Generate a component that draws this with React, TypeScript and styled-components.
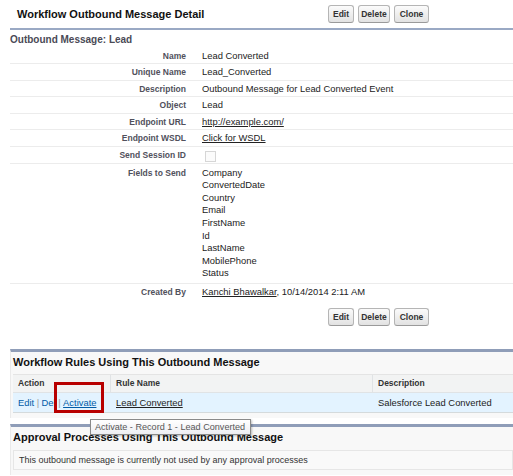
import React from "react";
import styled, { createGlobalStyle } from "styled-components";

const Global = createGlobalStyle`
  html, body {
    margin: 0;
    padding: 0;
    background: #ffffff;
    font-family: "Liberation Sans", Arial, sans-serif;
    color: #222;
  }
`;

const Page = styled.div`
  width: 513px;
  height: 476px;
  overflow: hidden;
  position: relative;
`;

const DetailHeader = styled.div`
  margin-left: 10px;
  height: 28px;
  display: flex;
  align-items: center;
  border-bottom: 2px solid #9aa9c4;
`;

const Title = styled.h2`
  margin: 0;
  width: 311px;
  padding-left: 7px;
  font-size: 11px;
  font-weight: bold;
  color: #111;
`;

const ButtonBar = styled.div<{ $offset?: number }>`
  display: flex;
  gap: 4px;
  margin-left: ${(p) => p.$offset ?? 0}px;
`;

const Btn = styled.button<{ $w: number }>`
  width: ${(p) => p.$w}px;
  height: 18px;
  padding: 0;
  font-family: "Liberation Sans", Arial, sans-serif;
  font-size: 8.5px;
  font-weight: bold;
  color: #333;
  background: linear-gradient(#fbfbfb, #e2e2e2);
  border: 1px solid #b5b5b5;
  border-bottom-color: #9a9a9a;
  border-radius: 3px;
`;

const SubTitle = styled.h3`
  margin: 1px 0 0 10px;
  height: 17px;
  line-height: 17px;
  font-size: 10px;
  font-weight: bold;
  color: #4a4a56;
`;

const Row = styled.div<{ $last?: boolean; $tall?: boolean }>`
  display: grid;
  grid-template-columns: 176px 1fr;
  margin-left: 10px;
  padding: ${(p) => (p.$tall ? "3px 0 3px" : "1.7px 0 1.2px")};
  line-height: 12.6px;
  border-bottom: 1px solid ${(p) => (p.$last ? "transparent" : "#ececec")};
`;

const Label = styled.div`
  text-align: right;
  font-size: 8.5px;
  font-weight: bold;
  color: #51515c;
`;

const Value = styled.div`
  padding-left: 16px;
  font-size: 9.4px;
  color: #222;
`;

const Link = styled.a`
  color: #222;
  text-decoration: underline;
`;

const Check = styled.span`
  display: inline-block;
  width: 9px;
  height: 9px;
  margin: 2px 0 0 3px;
  border: 1px solid #d6d6d6;
  background: #fbfbfb;
  vertical-align: top;
`;

const Related = styled.section<{ $top: number }>`
  margin: ${(p) => p.$top}px 0 0 10px;
  border-top: 3px solid #8f9db8;
  background: #f8f8f8;
  border-left: 1px solid #eaeaea;
  padding: 0 0 5px 2px;
`;

const RelTitle = styled.h3`
  margin: 0;
  padding: 1px 0 3px;
  line-height: 18px;
  font-size: 11px;
  font-weight: bold;
  color: #111;
`;

const Table = styled.div`
  position: relative;
  border-top: 1px solid #e4e4e4;
`;

const Tr = styled.div<{ $head?: boolean }>`
  display: grid;
  grid-template-columns: 98px 262px 1fr;
  background: ${(p) => (p.$head ? "#f2f3f3" : "#e3f3ff")};
  border-bottom: 1px solid ${(p) => (p.$head ? "#e0e3e5" : "#d4dadc")};
`;

const Th = styled.div`
  padding-left: 5px;
  height: 17px;
  line-height: 17px;
  font-size: 8.5px;
  font-weight: bold;
  color: #333;
  border-right: 1px solid #e0e3e5;
  &:last-child {
    border-right: none;
  }
`;

const Td = styled.div`
  padding-left: 5px;
  height: 19px;
  line-height: 19px;
  font-size: 9.4px;
  color: #222;
  white-space: nowrap;
`;

const ActionLink = styled.a<{ $hover?: boolean }>`
  color: #015ba7;
  text-decoration: ${(p) => (p.$hover ? "underline" : "none")};
`;

const Pipe = styled.span`
  color: #999;
  margin: 0 2.5px;
`;

const Marker = styled.div`
  position: absolute;
  left: 41px;
  top: 7px;
  width: 44px;
  height: 25px;
  border: 3px solid #b80000;
  pointer-events: none;
`;

const Tooltip = styled.div`
  position: absolute;
  left: 90px;
  top: 419px;
  height: 14px;
  padding: 0 5px 0 4px;
  line-height: 14px;
  font-size: 9.1px;
  color: #575757;
  background: linear-gradient(#ffffff, #eeeef2);
  border: 1px solid #8a8a8a;
  box-shadow: 1px 1px 2px rgba(0, 0, 0, 0.25);
  white-space: nowrap;
  z-index: 2;
`;

const Empty = styled.div`
  margin-top: 1px;
  height: 18px;
  line-height: 18px;
  padding-left: 5px;
  font-size: 9px;
  color: #333;
  background: #f9f9f9;
  border: 1px solid #e6e6e6;
`;

const fields = [
  "Company",
  "ConvertedDate",
  "Country",
  "Email",
  "FirstName",
  "Id",
  "LastName",
  "MobilePhone",
  "Status",
];

const buttons = (
  <>
    <Btn $w={26}>Edit</Btn>
    <Btn $w={32}>Delete</Btn>
    <Btn $w={35}>Clone</Btn>
  </>
);

export default function App() {
  return (
    <Page>
      <Global />
      <DetailHeader>
        <Title>Workflow Outbound Message Detail</Title>
        <ButtonBar>{buttons}</ButtonBar>
      </DetailHeader>
      <SubTitle>Outbound Message: Lead</SubTitle>

      <Row>
        <Label>Name</Label>
        <Value>Lead Converted</Value>
      </Row>
      <Row>
        <Label>Unique Name</Label>
        <Value>Lead_Converted</Value>
      </Row>
      <Row>
        <Label>Description</Label>
        <Value>Outbound Message for Lead Converted Event</Value>
      </Row>
      <Row>
        <Label>Object</Label>
        <Value>Lead</Value>
      </Row>
      <Row>
        <Label>Endpoint URL</Label>
        <Value>
          <Link>http://example.com/</Link>
        </Value>
      </Row>
      <Row>
        <Label>Endpoint WSDL</Label>
        <Value>
          <Link>Click for WSDL</Link>
        </Value>
      </Row>
      <Row>
        <Label>Send Session ID</Label>
        <Value>
          <Check />
        </Value>
      </Row>
      <Row $tall>
        <Label>Fields to Send</Label>
        <Value>
          {fields.map((f) => (
            <div key={f}>{f}</div>
          ))}
        </Value>
      </Row>
      <Row $last>
        <Label>Created By</Label>
        <Value>
          <Link>Kanchi Bhawalkar</Link>, 10/14/2014 2:11 AM
        </Value>
      </Row>

      <ButtonBar $offset={328} style={{ marginTop: 7 }}>
        {buttons}
      </ButtonBar>

      <Related $top={23}>
        <RelTitle>Workflow Rules Using This Outbound Message</RelTitle>
        <Table>
          <Tr $head>
            <Th>Action</Th>
            <Th>Rule Name</Th>
            <Th>Description</Th>
          </Tr>
          <Tr>
            <Td>
              <ActionLink>Edit</ActionLink>
              <Pipe>|</Pipe>
              <ActionLink>Del</ActionLink>
              <Pipe>|</Pipe>
              <ActionLink $hover>Activate</ActionLink>
            </Td>
            <Td>
              <Link>Lead Converted</Link>
            </Td>
            <Td>Salesforce Lead Converted</Td>
          </Tr>
          <Marker />
        </Table>
      </Related>

      <Related $top={6}>
        <RelTitle>Approval Processes Using This Outbound Message</RelTitle>
        <Empty>
          This outbound message is currently not used by any approval processes
        </Empty>
      </Related>

      <Tooltip>Activate - Record 1 - Lead Converted</Tooltip>
    </Page>
  );
}
